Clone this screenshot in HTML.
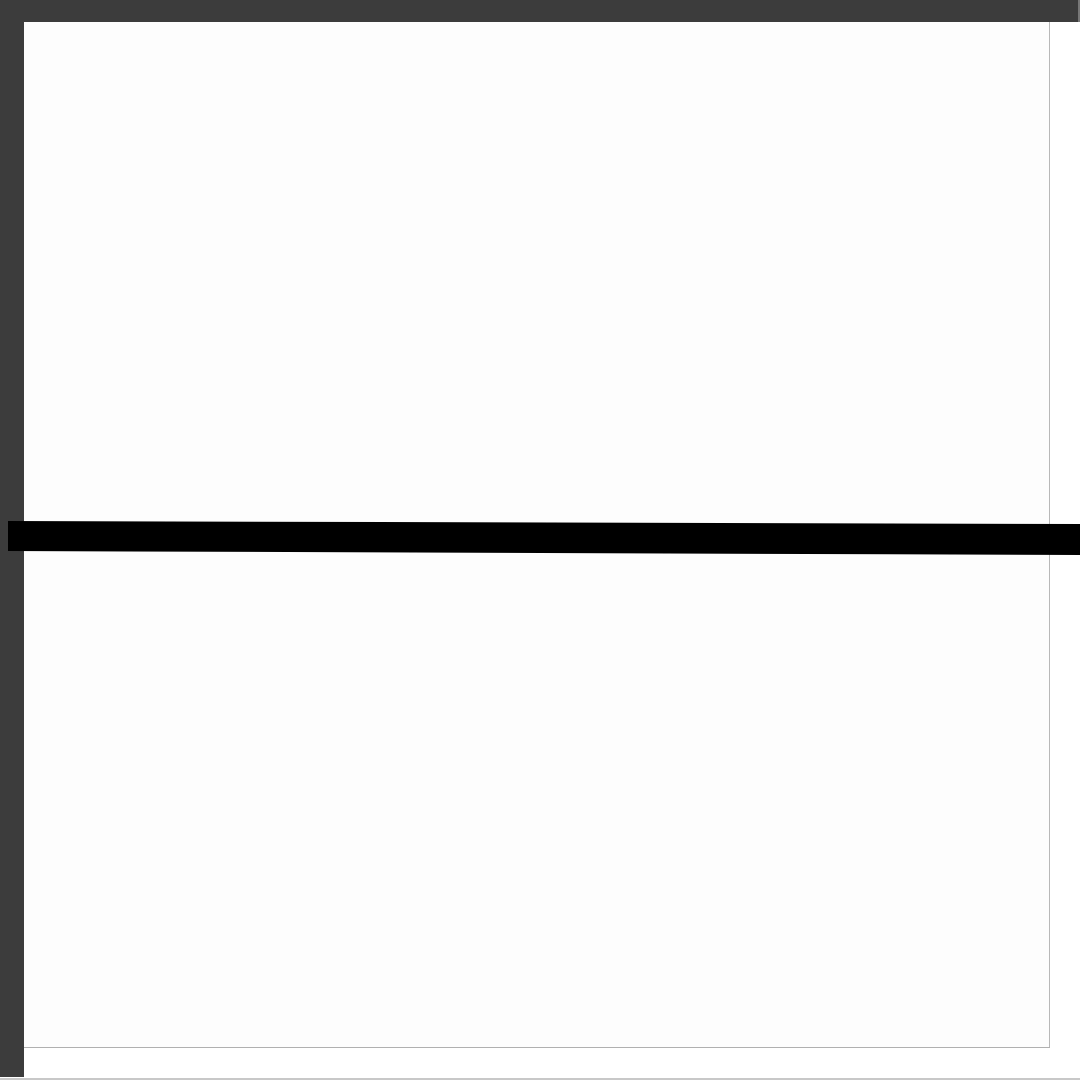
<!DOCTYPE html>
<html><head><style>
html,body{margin:0;padding:0;width:1080px;height:1080px;overflow:hidden;background:#fff}
</style></head><body>
<svg width="1080" height="1080" style="position:absolute;left:0;top:0">
<rect x="0" y="0" width="1080" height="1080" fill="#fff"/>
<rect x="24" y="22" width="1025" height="1025" fill="#fdfdfd"/>
<rect x="1049" y="22" width="1" height="1026" fill="#b8b8b8"/>
<rect x="24" y="1047" width="1026" height="1" fill="#b0b0b0"/>
<rect x="0" y="1078" width="1080" height="2" fill="#c8c8c8"/>
<rect x="0" y="0" width="1080" height="22" fill="#3c3c3c"/>
<rect x="0" y="0" width="24" height="1077" fill="#3c3c3c"/>
<rect x="1078" y="0" width="2" height="22" fill="#777"/>
<polygon points="8,521 1080,524 1080,555 8,551" fill="#000"/>
</svg>
</body></html>
